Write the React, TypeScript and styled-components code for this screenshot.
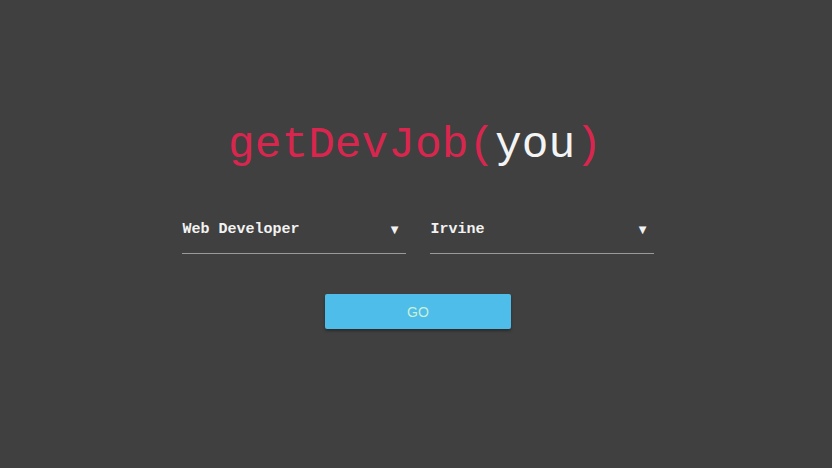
import React from "react";
import styled, { createGlobalStyle } from "styled-components";

const Global = createGlobalStyle`
  html, body { margin: 0; padding: 0; background: #404040; }
  body { width: 832px; height: 468px; overflow: hidden; }
`;

const mono = `"Courier New", "Nimbus Mono PS", "FreeMono", "Liberation Mono", monospace`;

const Page = styled.main`
  width: 832px;
  height: 468px;
  display: flex;
  flex-direction: column;
  align-items: center;
  padding-top: 119px;
  box-sizing: border-box;
`;

const Title = styled.h1`
  margin: 0 0 0 -2px;
  font-family: ${mono};
  font-weight: normal;
  font-size: 44.5px;
  line-height: 52px;
  color: #d8264f;
`;

const Arg = styled.span`
  color: #f4f4f4;
`;

const Row = styled.div`
  display: flex;
  gap: 24px;
  margin-top: 43px;
  margin-left: 3px;
`;

const Select = styled.div`
  width: 224px;
  height: 40px;
  box-sizing: border-box;
  display: flex;
  align-items: center;
  justify-content: space-between;
  padding: 0 7px 9px 1px;
  border-bottom: 1px solid #9a9a9a;
  font-family: ${mono};
  font-weight: bold;
  font-size: 15px;
  color: #f2f2f2;
`;

const Arrow = styled.span`
  font-family: "DejaVu Sans", sans-serif;
  font-size: 10px;
  color: #f2f2f2;
`;

const Go = styled.button`
  margin-top: 40px;
  margin-left: 4px;
  width: 186px;
  height: 35px;
  border: none;
  border-radius: 2px;
  background: #4fbde9;
  color: #c9f0d6;
  font-family: "Liberation Sans", Arial, sans-serif;
  font-size: 14px;
  box-shadow: 0 2px 3px rgba(0, 0, 0, 0.35);
  cursor: pointer;
`;

export default function App() {
  return (
    <>
      <Global />
      <Page>
        <Title>
          getDevJob(<Arg>you</Arg>)
        </Title>
        <Row>
          <Select>
            <span>Web Developer</span>
            <Arrow>▼</Arrow>
          </Select>
          <Select>
            <span>Irvine</span>
            <Arrow>▼</Arrow>
          </Select>
        </Row>
        <Go>GO</Go>
      </Page>
    </>
  );
}
